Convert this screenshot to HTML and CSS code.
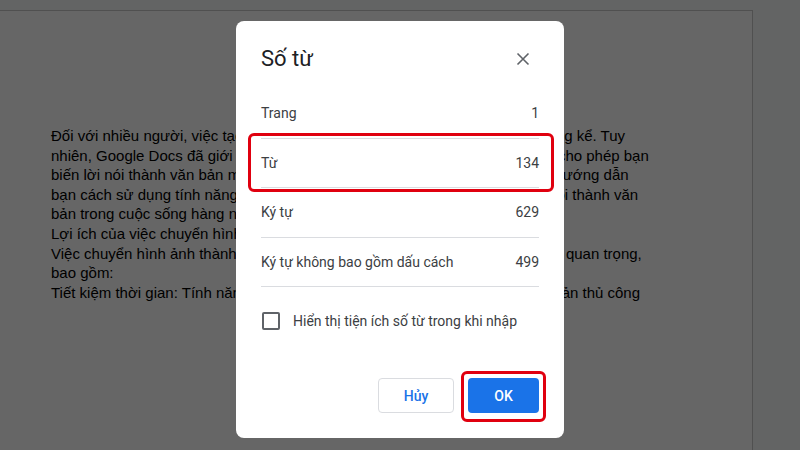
FILE: index.html
```html
<!DOCTYPE html>
<html lang="vi">
<head>
  <meta charset="UTF-8" />
  <meta name="viewport" content="width=device-width, initial-scale=1.0" />
  <title>Số từ</title>
  <link rel="stylesheet" href="styles.css">
</head>
<body>
  <div class="page">
    <p class="doc-text">
      Đối với nhiều người, việc tạo tài liệu từ hình ảnh là một việc tốn thời gian đáng kể. Tuy<br>
      nhiên, Google Docs đã giới thiệu tính năng nhận diện giọng nói và hình ảnh cho phép bạn<br>
      biến lời nói thành văn bản một cách rất nhanh và chính xác. Bài viết này sẽ hướng dẫn<br>
      bạn cách sử dụng tính năng chuyển hình ảnh thành văn bản, hay từ giọng nói thành văn<br>
      bản trong cuộc sống hàng ngày.<br>
      Lợi ích của việc chuyển hình ảnh thành văn bản<br>
      Việc chuyển hình ảnh thành văn bản trên Google Docs mang lại nhiều lợi ích quan trọng,<br>
      bao gồm:<br>
      Tiết kiệm thời gian: Tính năng này giúp bạn giảm thời gian so với nhập văn bản thủ công
    </p>
  </div>

  <div class="scrim"></div>

  <div class="dialog">
    <div class="dialog-header">
      <h2>Số từ</h2>
      <button class="close" aria-label="Đóng">
        <svg width="24" height="24" viewBox="0 0 24 24"><path d="M6.5 6.5l11 11M17.5 6.5l-11 11" stroke="#5f6368" stroke-width="1.6" fill="none"/></svg>
      </button>
    </div>

    <div class="stats">
      <div class="stat"><span>Trang</span><span>1</span></div>
      <div class="stat marked"><span>Từ</span><span>134</span></div>
      <div class="stat"><span>Ký tự</span><span>629</span></div>
      <div class="stat"><span>Ký tự không bao gồm dấu cách</span><span>499</span></div>
    </div>

    <label class="check">
      <span class="box"></span>
      Hiển thị tiện ích số từ trong khi nhập
    </label>

    <div class="actions">
      <button class="btn btn-cancel">Hủy</button>
      <button class="btn btn-ok marked">OK</button>
    </div>
  </div>
</body>
</html>
```

FILE: styles.css
```css
body {
  margin: 0;
  background: #f8f9fa;
  font-family: 'Liberation Sans', Arial, sans-serif;
  overflow: hidden;
  height: 450px;
}
.page {
  margin: 10px 47px 0 -20px;
  height: 460px;
  background: white;
  border-top: 1px solid #c9c9c9;
  border-right: 1px solid #c9c9c9;
  padding: 115px 0 0 71px;
  box-sizing: border-box;
}
.doc-text {
  margin: 0;
  font-size: 15px;
  line-height: 19.6px;
  color: #000;
  white-space: nowrap;
}
.scrim {
  position: fixed;
  inset: 0;
  background: rgba(0, 0, 0, 0.6);
}

.dialog {
  position: fixed;
  left: 236px;
  top: 21px;
  width: 328px;
  height: 417px;
  box-sizing: border-box;
  padding: 0 25px 25px 25px;
  background: white;
  border-radius: 8px;
  display: flex;
  flex-direction: column;
  font-family: Roboto, 'Liberation Sans', sans-serif;
  color: #3c4043;
}
.dialog-header {
  display: flex;
  justify-content: space-between;
  align-items: center;
  padding: 24px 0 16px;
}
.dialog-header h2 {
  margin: 0;
  font-size: 22px;
  line-height: 28px;
  font-weight: 400;
  color: #202124;
}
.close {
  border: 0;
  background: none;
  padding: 0;
  margin-right: 4px;
  width: 24px;
  height: 24px;
}
.stat {
  display: flex;
  justify-content: space-between;
  align-items: center;
  height: 48.5px;
  border-bottom: 1px solid #dadce0;
  font-size: 14px;
  position: relative;
}
.marked {
  position: relative;
}
.marked::after {
  content: "";
  position: absolute;
  border: 3px solid #e0000f;
  border-radius: 6px;
}
.stat.marked::after {
  top: -6px;
  left: -13px;
  right: -15px;
  bottom: -5px;
}
.check {
  display: flex;
  align-items: center;
  gap: 13px;
  margin-top: 25px;
  font-size: 14px;
  color: #3c4043;
}
.box {
  width: 14px;
  height: 14px;
  border: 2px solid #5f6368;
  border-radius: 2px;
  margin-left: 1px;
}
.actions {
  margin-top: auto;
  display: flex;
  justify-content: flex-end;
  gap: 14px;
}
.btn {
  height: 35px;
  border-radius: 4px;
  font-family: Roboto, 'Liberation Sans', sans-serif;
  font-size: 14px;
  font-weight: 500;
}
.btn-cancel {
  width: 76px;
  background: white;
  border: 1px solid #dadce0;
  color: #1a73e8;
}
.btn-ok {
  width: 71px;
  background: #1a73e8;
  border: 0;
  color: white;
}
.btn-ok.marked::after {
  top: -7px;
  left: -7px;
  right: -7px;
  bottom: -9px;
}
```
